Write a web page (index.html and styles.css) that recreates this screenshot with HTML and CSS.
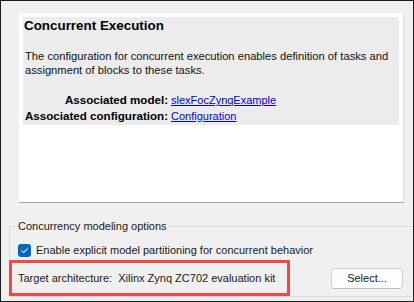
FILE: index.html
```
<!DOCTYPE html>
<html lang="en">
<head>
    <meta charset="UTF-8">
    <title>Concurrent Execution</title>
    <link rel="stylesheet" href="styles.css">
</head>
<body>
    <div class="dialog">
        <div class="panel">
            <div class="info">
                <h1 class="title">Concurrent Execution</h1>
                <p class="desc">The configuration for concurrent execution enables definition of tasks and<br>assignment of blocks to these tasks.</p>
                <table class="assoc">
                    <tr>
                        <td class="key">Associated model:</td>
                        <td><a href="#">slexFocZynqExample</a></td>
                    </tr>
                    <tr>
                        <td class="key">Associated configuration:</td>
                        <td><a href="#">Configuration</a></td>
                    </tr>
                </table>
            </div>
        </div>

        <fieldset class="group">
            <legend>Concurrency modeling options</legend>
            <label class="check-row">
                <span class="checkbox">
                    <svg width="13" height="13" viewBox="0 0 13 13">
                        <path d="M3.6 6.7 L5.6 8.6 L9.5 4.6" fill="none" stroke="#fff" stroke-width="1.1"/>
                    </svg>
                </span>
                Enable explicit model partitioning for concurrent behavior
            </label>
            <div class="target-row">
                <div class="target">Target architecture:&nbsp; Xilinx Zynq ZC702 evaluation kit</div>
                <button class="btn">Select...</button>
            </div>
        </fieldset>
    </div>
</body>
</html>
```

FILE: styles.css
```
body {
    margin: 0;
    font-family: 'Liberation Sans', Arial, sans-serif;
    font-size: 11px;
    color: #1a1a1a;
}

.dialog {
    width: 414px;
    height: 302px;
    box-sizing: border-box;
    border: 1px solid #1c1c1c;
    background: #f0f0f0;
    padding: 12px 1px 0 8px;
}

/* white report panel */
.panel {
    margin-left: 10px;
    width: 385px;
    height: 190px;
    box-sizing: border-box;
    background: #fff;
    border-right: 1px solid #dcdcdc;
    border-bottom: 1px solid #a5a5a5;
    padding: 4px 4px 0 4px;
}

.info {
    background: #ececec;
    height: 108px;
    padding: 1px 0 0 1px;
    box-sizing: border-box;
    font-size: 11.2px;
}

.title {
    margin: 0;
    font-size: 13.4px;
    line-height: 16px;
    font-weight: bold;
    color: #000;
}

.desc {
    margin: 15px 0 0 1px;
    line-height: 14px;
    color: #111;
    white-space: nowrap;
}

.assoc {
    margin-top: 15px;
    border-collapse: collapse;
    line-height: 16px;
}

.assoc td {
    padding: 0;
}

.assoc td.key {
    text-align: right;
    font-weight: bold;
    font-size: 11.6px;
    color: #000;
    padding-right: 3px;
    padding-left: 1px;
}

.assoc a {
    color: #0000f0;
    font-size: 11px;
}

/* group box */
.group {
    margin: 15px 0 0 0;
    padding: 0;
    border: 1px solid #dcdcdc;
    border-right: none;
    min-width: 0;
}

.group legend {
    margin-left: 7px;
    padding: 0 1px;
    line-height: 16px;
    color: #1a1a1a;
}

.check-row {
    display: flex;
    align-items: center;
    gap: 5px;
    height: 14px;
    margin: 9px 0 0 8px;
}

.checkbox {
    width: 13px;
    height: 13px;
    border-radius: 3px;
    background: #0067c0;
    display: flex;
}

.target-row {
    display: flex;
    align-items: center;
    justify-content: space-between;
    margin: 3px 9px 0 -1px;
}

.target {
    width: 281px;
    height: 36px;
    box-sizing: border-box;
    border: 3px solid #f24848;
    padding-left: 6px;
    display: flex;
    align-items: center;
}

.btn {
    width: 72px;
    height: 21px;
    font-family: inherit;
    font-size: 11px;
    color: #1a1a1a;
    background: #fdfdfd;
    border: 1px solid #d0d0d0;
    border-bottom-color: #bcbcbc;
    border-radius: 4px;
    padding: 0;
}
```
